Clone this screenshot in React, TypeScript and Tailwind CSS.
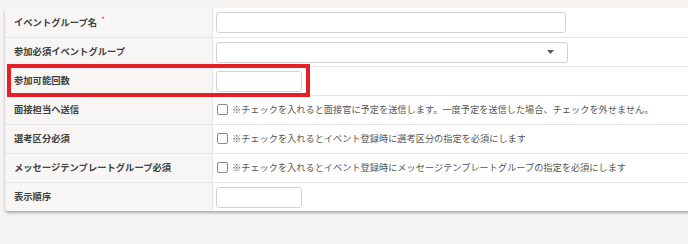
import React from 'react';

type Row = {
  label: string;
  required?: boolean;
  kind: 'text' | 'select' | 'short' | 'check';
  note?: string;
};

const rows: Row[] = [
  { label: 'イベントグループ名', required: true, kind: 'text' },
  { label: '参加必須イベントグループ', kind: 'select' },
  { label: '参加可能回数', kind: 'short' },
  {
    label: '面接担当へ送信',
    kind: 'check',
    note: '※チェックを入れると面接官に予定を送信します。一度予定を送信した場合、チェックを外せません。',
  },
  {
    label: '選考区分必須',
    kind: 'check',
    note: '※チェックを入れるとイベント登録時に選考区分の指定を必須にします',
  },
  {
    label: 'メッセージテンプレートグループ必須',
    kind: 'check',
    note: '※チェックを入れるとイベント登録時にメッセージテンプレートグループの指定を必須にします',
  },
  { label: '表示順序', kind: 'short' },
];

function Field({ row }: { row: Row }) {
  if (row.kind === 'text') {
    return <div className="h-[21px] w-[350px] rounded-[3px] border border-[#d2d2d2] bg-white" />;
  }
  if (row.kind === 'select') {
    return (
      <div className="flex h-[21px] w-[352px] items-center justify-end rounded-[3px] border border-[#d2d2d2] bg-white pr-[13px]">
        <svg width="7" height="4" viewBox="0 0 7 4">
          <path d="M0 0 L7 0 L3.5 4 Z" fill="#5a5a5a" />
        </svg>
      </div>
    );
  }
  if (row.kind === 'short') {
    return <div className="h-[21px] w-[86px] rounded-[3px] border border-[#d2d2d2] bg-white" />;
  }
  return (
    <div className="flex items-center gap-[4px] pl-[1px]">
      <span className="block h-[11px] w-[11px] rounded-[2px] border border-[#8a8a8a] bg-white" />
      <span className="text-[9.2px] text-[#555]">{row.note}</span>
    </div>
  );
}

export default function App() {
  return (
    <div
      className="relative h-[244px] w-[688px] overflow-hidden bg-[#f5f4f2] pt-[8px] pl-[5px]"
      style={{ fontFamily: '"Noto Sans CJK JP", "Noto Sans", sans-serif' }}
    >
      <div className="w-[720px] overflow-hidden rounded-[4px] bg-white shadow-[0_2px_3px_rgba(0,0,0,0.3)]">
        {rows.map((row, i) => (
          <div
            key={row.label}
            className={`flex h-[29px] ${i > 0 ? 'border-t border-[#e6e5e3]' : ''}`}
          >
            <div className="flex w-[208px] shrink-0 items-center border-r border-[#e6e5e3] bg-[#f7f6f4] pl-[9px]">
              <span className="text-[9.3px] font-bold text-[#404040]">{row.label}</span>
              {row.required && (
                <span className="ml-[4px] -mt-[5px] text-[8px] text-[#e3343a]">*</span>
              )}
            </div>
            <div className="flex flex-1 items-center pl-[3px]">
              <Field row={row} />
            </div>
          </div>
        ))}
      </div>

      <div className="absolute left-[7px] top-[64px] h-[33px] w-[303px] border-[4px] border-[#e41f26]" />
    </div>
  );
}
